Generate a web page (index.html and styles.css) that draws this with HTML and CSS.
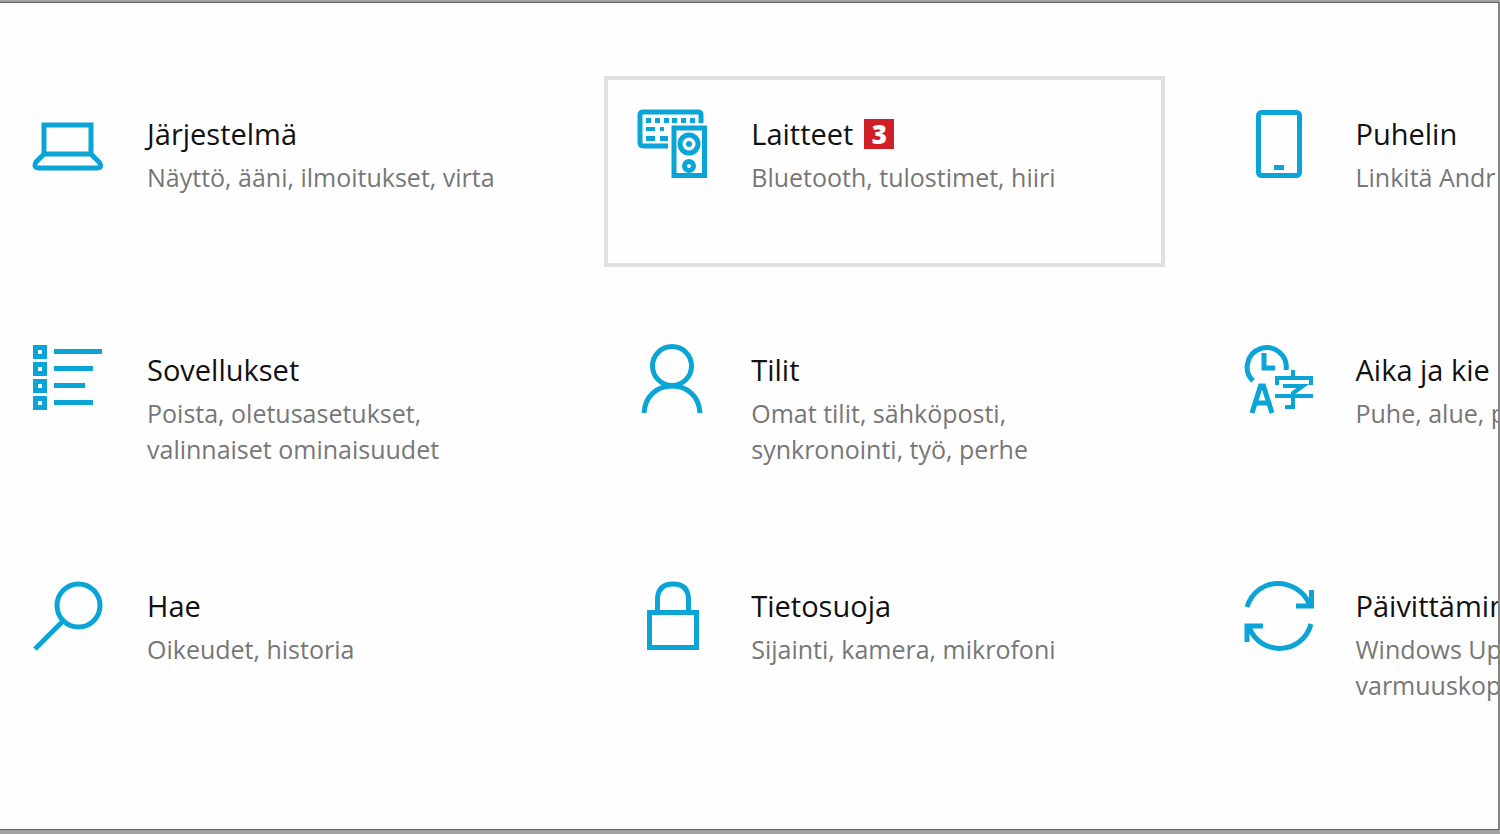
FILE: index.html
```html
<!DOCTYPE html>
<html lang="fi">
<head>
<meta charset="utf-8">
<title>Asetukset</title>
<link rel="stylesheet" href="styles.css">
</head>
<body>
<main class="window">
  <nav class="tiles" aria-label="Asetukset">
    <a class="tile" href="#jarjestelma">
      <svg class="icon" viewBox="0 0 70 70" aria-hidden="true"><path d="M11 16H58V45H11zM11 45L3 53Q0 59 6 59H64Q70 59 66 53L58 45"/></svg>
      <span class="text"><span class="title">Järjestelmä</span><span class="desc">Näyttö, ääni, ilmoitukset, virta</span></span>
    </a>
    <a class="tile tile-active" href="#laitteet">
      <svg class="icon" viewBox="0 0 70 70" aria-hidden="true">
        <path d="M64 14V6Q64 3 61 3H6Q3 3 3 6V33Q3 37 6 37H31"/>
        <path class="solid" d="M9 9h5v5h-5zM18 9h5v5h-5zM27 9h5v5h-5zM35 9h5v5h-5zM44 9h5v5h-5zM53 9h5v5h-5zM9 18h9v4h-9zM23 18h4v4h-4zM9 27h9v5h-9zM23 27h8v5h-8z"/>
        <path d="M37 19H67.500V66.500H37z"/>
        <circle cx="52" cy="35" r="9"/><circle class="solid" cx="52" cy="35" r="3"/>
        <circle cx="52" cy="57" r="4.500"/>
      </svg>
      <span class="text"><span class="title">Laitteet <span class="badge">3</span></span><span class="desc">Bluetooth, tulostimet, hiiri</span></span>
    </a>
    <a class="tile" href="#puhelin">
      <svg class="icon" viewBox="0 0 70 70" aria-hidden="true"><rect x="16.500" y="3.500" width="41" height="63" rx="3"/><path d="M32 58.500H42"/></svg>
      <span class="text"><span class="title">Puhelin</span><span class="desc">Linkitä Andr</span></span>
    </a>
    <a class="tile" href="#sovellukset">
      <svg class="icon" viewBox="0 0 70 70" aria-hidden="true"><path d="M2.500 2.500h9v9h-9zM2.500 19.500h9v9h-9zM2.500 36.500h9v9h-9zM2.500 53.500h9v9h-9zM21 6.500H69M21 23.500H60M21 40.500H52M21 57.500H60"/></svg>
      <span class="text"><span class="title">Sovellukset</span><span class="desc">Poista, oletusasetukset,<br>valinnaiset ominaisuudet</span></span>
    </a>
    <a class="tile" href="#tilit">
      <svg class="icon" viewBox="0 0 70 70" aria-hidden="true"><circle cx="35" cy="21" r="19.500"/><path d="M7 68C8 51 20 41 35 41S62 51 63 68"/></svg>
      <span class="text"><span class="title">Tilit</span><span class="desc">Omat tilit, sähköposti,<br>synkronointi, työ, perhe</span></span>
    </a>
    <a class="tile" href="#aika">
      <svg class="icon" viewBox="0 0 70 70" aria-hidden="true">
        <path d="M11 36A19.500 19.500 0 1 1 44 25M22 8V23H33"/>
        <path d="M10 68L18.500 41H21.500L30 68M13 58H27"/>
        <path class="thin" d="M51 25V32M35 40V33H69V40M41 41H61L51 48V62H43M33 51H71"/>
      </svg>
      <span class="text"><span class="title">Aika ja kie</span><span class="desc">Puhe, alue, p</span></span>
    </a>
    <a class="tile" href="#hae">
      <svg class="icon" viewBox="0 0 70 70" aria-hidden="true"><circle cx="45.500" cy="24.500" r="21.500"/><path d="M30 40L2 68"/></svg>
      <span class="text"><span class="title">Hae</span><span class="desc">Oikeudet, historia</span></span>
    </a>
    <a class="tile" href="#tietosuoja">
      <svg class="icon" viewBox="0 0 70 70" aria-hidden="true"><path d="M12.500 31.500H59.500V66.500H12.500zM20.500 31V18Q21 3 36 3T51.500 18V31"/></svg>
      <span class="text"><span class="title">Tietosuoja</span><span class="desc">Sijainti, kamera, mikrofoni</span></span>
    </a>
    <a class="tile" href="#paivittaminen">
      <svg class="icon" viewBox="0 0 70 70" aria-hidden="true"><path d="M5 26C15 -5 55 -5 68 24M69.500 9V25H54M69 43C60 75 18 75 7 46M5 61V45H21"/></svg>
      <span class="text"><span class="title">Päivittämin</span><span class="desc">Windows Up<br>varmuuskop</span></span>
    </a>
  </nav>
</main>
</body>
</html>
```
FILE: styles.css
```css
* {
  box-sizing: border-box;
}

body {
  display: flex;
  flex-direction: column;
  min-height: 100vh;
  margin: 0;
  padding: 2px 0 4px;
  background: #a0a3a2;
  font-family: "Open Sans", "Noto Sans", sans-serif;
}

.window {
  flex: 1;
  overflow: hidden;
  background: #fefefe;
  border: 1px solid #606262;
  border-width: 1px 2px 1px 0;
  border-right-color: #858585;
}

.tiles {
  display: grid;
  grid-template-columns: repeat(3, 37.4%);
  grid-auto-rows: minmax(191px, auto);
  gap: 45px 44px;
  padding-top: 73px;
}

.tile {
  display: flex;
  align-items: flex-start;
  gap: 44px;
  padding: 29px;
  border: 4px solid transparent;
  color: #111;
  text-decoration: none;
  white-space: nowrap;
}

.tile-active {
  border-color: #dfe0e0;
}

.icon {
  flex: none;
  width: 70px;
  height: 70px;
  overflow: visible;
  fill: none;
  stroke: #0aa5d6;
  stroke-width: 5;
}

.icon .solid {
  fill: #0aa5d6;
  stroke: none;
}

.icon .thin {
  stroke-width: 4;
}

.text {
  display: flex;
  flex-direction: column;
}

.title {
  display: flex;
  align-items: center;
  gap: 11px;
  font-size: 29px;
  line-height: 50px;
}

.desc {
  color: #777;
  font-size: 25px;
  line-height: 36px;
}

.badge {
  width: 30px;
  background: #cf2027;
  color: #fff;
  font-size: 26px;
  font-weight: 800;
  line-height: 30px;
  text-align: center;
}
```
